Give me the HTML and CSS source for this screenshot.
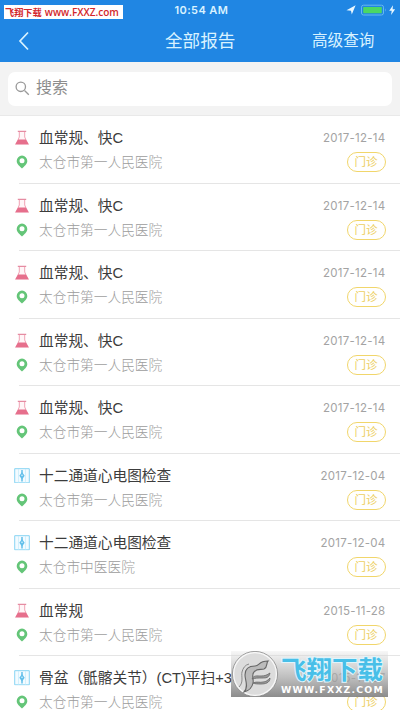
FILE: index.html
```html
<!DOCTYPE html>
<html lang="zh-CN">
<head>
<meta charset="utf-8">
<title>全部报告</title>
<link rel="stylesheet" href="styles.css">
</head>
<body>
<svg class="defs" width="0" height="0">
  <symbol id="flask" viewBox="0 0 14 16" preserveAspectRatio="none">
    <path d="M4.3 2v5.2L1.4 14h11.2L9.7 7.2V2" fill="#fff5f7" stroke="#f0a0b2" stroke-width="1"/>
    <path d="M2.8 1.5h8.4" stroke="#e58ca2" stroke-width="1.3"/>
    <path d="M3.1 9.8h7.8L14 15H0z" fill="#e66f8c"/>
  </symbol>
  <symbol id="scan" viewBox="0 0 16 16" preserveAspectRatio="none">
    <path d="M.7.7h14.6v14.6H.7z" fill="#f3fbff" stroke="#86d3f3"/>
    <path d="M4.5 1v14M11.5 1v14" stroke="#c5eafa" stroke-width=".7"/>
    <path d="M8 2v12" stroke="#62bfea" stroke-width="1.5"/>
    <path d="M8 4.2l2.7 3.8L8 11.8 5.3 8z" fill="#62bfea"/>
    <circle cx="8" cy="7.6" r=".8" fill="#d5f1fc"/>
  </symbol>
  <symbol id="pin" viewBox="0 0 12 14">
    <path fill-rule="evenodd" d="M6 .6a5.3 5.3 0 0 1 5.3 5.3C11.3 9 8 11.3 6 13.5 4 11.3.7 9 .7 5.9A5.3 5.3 0 0 1 6 .6zM6 3.3a2.5 2.5 0 1 0 0 5 2.5 2.5 0 0 0 0-5z" fill="#64c578"/>
  </symbol>
</svg>
<div class="screen">
  <header class="top">
    <div class="status">
      <span class="site"><span class="site-cn">飞翔下载</span>www.FXXZ.com</span>
      <span class="time">10:54 AM</span>
      <svg class="indicators" width="52" height="14" viewBox="0 0 52 14">
        <path d="M.5 7.2 9.6 2.3 5.8 11.6 5 7.7z" fill="#eaf8ff"/>
        <rect x="15.5" y="2.2" width="22" height="9.8" rx="2" fill="none" stroke="#66b9ef"/>
        <rect x="17.2" y="3.9" width="18.6" height="6.4" rx=".7" fill="#4bd763"/>
        <path d="M39 5.2v3.6q1.4-1.8 0-3.6z" fill="#66b9ef"/>
        <path d="M47 2.2 43.2 7.7h2.5l-.6 4.3 4-5.8h-2.5z" fill="#eaf8ff"/>
      </svg>
    </div>
    <nav class="nav">
      <svg class="back" width="12" height="20" viewBox="0 0 12 20"><path d="M10 1.5 2 10l8 8.5" fill="none" stroke="#d9f3ff" stroke-width="1.7"/></svg>
      <h1>全部报告</h1>
      <a class="advanced">高级查询</a>
    </nav>
  </header>
  <div class="search">
    <div class="field">
      <svg width="16" height="16" viewBox="0 0 16 16" fill="none" stroke="#999" stroke-width="1.3"><circle cx="5.8" cy="5.8" r="4.7"/><path d="m9.5 9.5 4.3 4.2"/></svg>
      <span>搜索</span>
    </div>
  </div>
  <ul class="list">
    <li><svg class="kind"><use href="#flask"/></svg><b>血常规、快C</b><time>2017-12-14</time><svg class="pin"><use href="#pin"/></svg><span class="place">太仓市第一人民医院</span><span class="tag">门诊</span></li>
    <li><svg class="kind"><use href="#flask"/></svg><b>血常规、快C</b><time>2017-12-14</time><svg class="pin"><use href="#pin"/></svg><span class="place">太仓市第一人民医院</span><span class="tag">门诊</span></li>
    <li><svg class="kind"><use href="#flask"/></svg><b>血常规、快C</b><time>2017-12-14</time><svg class="pin"><use href="#pin"/></svg><span class="place">太仓市第一人民医院</span><span class="tag">门诊</span></li>
    <li><svg class="kind"><use href="#flask"/></svg><b>血常规、快C</b><time>2017-12-14</time><svg class="pin"><use href="#pin"/></svg><span class="place">太仓市第一人民医院</span><span class="tag">门诊</span></li>
    <li><svg class="kind"><use href="#flask"/></svg><b>血常规、快C</b><time>2017-12-14</time><svg class="pin"><use href="#pin"/></svg><span class="place">太仓市第一人民医院</span><span class="tag">门诊</span></li>
    <li><svg class="kind scan"><use href="#scan"/></svg><b>十二通道心电图检查</b><time>2017-12-04</time><svg class="pin"><use href="#pin"/></svg><span class="place">太仓市第一人民医院</span><span class="tag">门诊</span></li>
    <li><svg class="kind scan"><use href="#scan"/></svg><b>十二通道心电图检查</b><time>2017-12-04</time><svg class="pin"><use href="#pin"/></svg><span class="place">太仓市中医医院</span><span class="tag">门诊</span></li>
    <li><svg class="kind"><use href="#flask"/></svg><b>血常规</b><time>2015-11-28</time><svg class="pin"><use href="#pin"/></svg><span class="place">太仓市第一人民医院</span><span class="tag">门诊</span></li>
    <li><svg class="kind scan"><use href="#scan"/></svg><b>骨盆（骶髂关节）(CT)平扫+3</b><time>2015-11-27</time><svg class="pin"><use href="#pin"/></svg><span class="place">太仓市第一人民医院</span><span class="tag">门诊</span></li>
  </ul>
  <div class="watermark">
    <svg width="48" height="46" viewBox="0 0 48 46">
      <circle cx="24" cy="23" r="21.7" fill="#dcdcdc" stroke="#f8f8f8" stroke-width="2"/>
      <circle cx="24" cy="23" r="22.6" fill="none" stroke="#777" stroke-width=".7"/>
      <path d="M13 41C18 36 14 29 14 24c0-7 4-9 10-9 5 0 3-5 13-5-2 2 0 6-4 8-3 1-7-1-10 3-3 3 0 7-1 11-1 5-5 8-9 9z" fill="#bbb" stroke="#666" stroke-width="1.1"/>
      <path d="M8 36c5-5 2-11 3-15 1-4 3-7 7-8" fill="none" stroke="#888"/>
      <path d="M21 28c2-4 5-3 9-3 4 0 6-1 9-3-1 5-4 5-8 5-4 0-7 0-10 1zm1 4c4-2 7 0 10-1 3 0 5-2 7-4 0 5-5 6-9 6-3 0-6 0-8-1z" fill="#999" stroke="#666" stroke-width=".8"/>
    </svg>
    <div class="brand"><strong>飞翔下载</strong><span>WWW.FXXZ.COM</span></div>
  </div>
</div>
</body>
</html>
```
FILE: styles.css
```css
* { box-sizing: border-box; margin: 0; padding: 0; }
body { font-family: "Liberation Sans", "Noto Sans CJK SC", sans-serif; background: #fff; overflow: hidden; }
svg { display: block; }
.defs { position: absolute; }
.screen { position: relative; width: 400px; height: 710px; overflow: hidden; }
.top { height: 62px; background: #2086e3; }
.status { height: 20px; display: grid; grid-template-columns: 173px 1fr 54px; align-items: start; }
.site { margin: 5px 0 0 4px; width: 119px; height: 14px; background: #fff; color: #d3262b; font: 600 10px/15px "Open Sans", sans-serif; display: flex; gap: 3px; padding-left: 1px; white-space: nowrap; }
.site-cn { font: 700 9.2px/15px "Noto Sans CJK SC", sans-serif; }
.time { color: #d9f2ff; font: 600 11px/20px Inter, sans-serif; letter-spacing: .4px; padding-left: 1.5px; }
.indicators { margin-top: 3px; }
.nav { height: 42px; display: grid; grid-template-columns: 165px 147px 1fr; align-items: center; color: #d9f2ff; }
.back { margin-left: 18px; }
.nav h1 { font-weight: 400; font-size: 17.6px; line-height: 42px; }
.advanced { font-size: 15.6px; line-height: 42px; }
.search { height: 54px; background: #f3f3f3; border-bottom: 1px solid #e9e9e9; padding: 9.5px 8px 9px; }
.field { height: 34.5px; background: #fff; border-radius: 7px; display: flex; align-items: center; gap: 5px; padding-left: 7px; color: #8d8d8d; font-size: 16px; line-height: 24px; }
.field span { margin-top: -1px; }
.list { list-style: none; }
.list li { position: relative; height: 67.5px; display: grid; grid-template-columns: 17px 1fr auto; grid-template-rows: 22px 26px; column-gap: 8px; align-items: center; padding: 11px 14.5px 0 14px; }
.list li::after { content: ""; position: absolute; left: 19px; right: 0; bottom: 0; height: 1px; background: #e5e5e5; }
.kind { width: 14px; height: 15.5px; margin-left: 1px; }
.kind.scan { width: 16px; margin-left: 0; }
.pin { width: 12px; height: 14px; margin-left: 1.5px; }
.list b { font-weight: 400; font-size: 14.7px; line-height: 22px; color: #3c3c3c; white-space: nowrap; }
.list time { font: 400 11.5px/22px Inter, sans-serif; color: #a3a3a3; letter-spacing: .27px; text-align: right; }
.place { font-size: 13.7px; line-height: 24px; padding-top: 2px; color: #9c9c9c; font-weight: 300; }
.tag { justify-self: end; width: 39px; height: 20px; border: 1.3px solid #f1d66b; border-radius: 10px; color: #edcf62; font-size: 11.5px; line-height: 18px; text-align: center; }
.watermark { position: absolute; left: 231px; top: 651px; width: 157px; height: 46px; display: flex; background: linear-gradient(rgba(235,235,235,.4), rgba(165,165,165,.75) 60%, rgba(130,130,130,.92)); }
.brand { width: 108px; padding-left: 2px; white-space: nowrap; }
.brand strong { display: block; height: 33px; font: 700 25.5px/33px "Noto Sans CJK SC", sans-serif; color: #48bfe8; -webkit-text-stroke: 2px #e0f5fc; paint-order: stroke fill; }
.brand span { display: block; font: 700 9.3px/12px "DejaVu Sans", sans-serif; color: #fff; letter-spacing: 1.2px; }
```
